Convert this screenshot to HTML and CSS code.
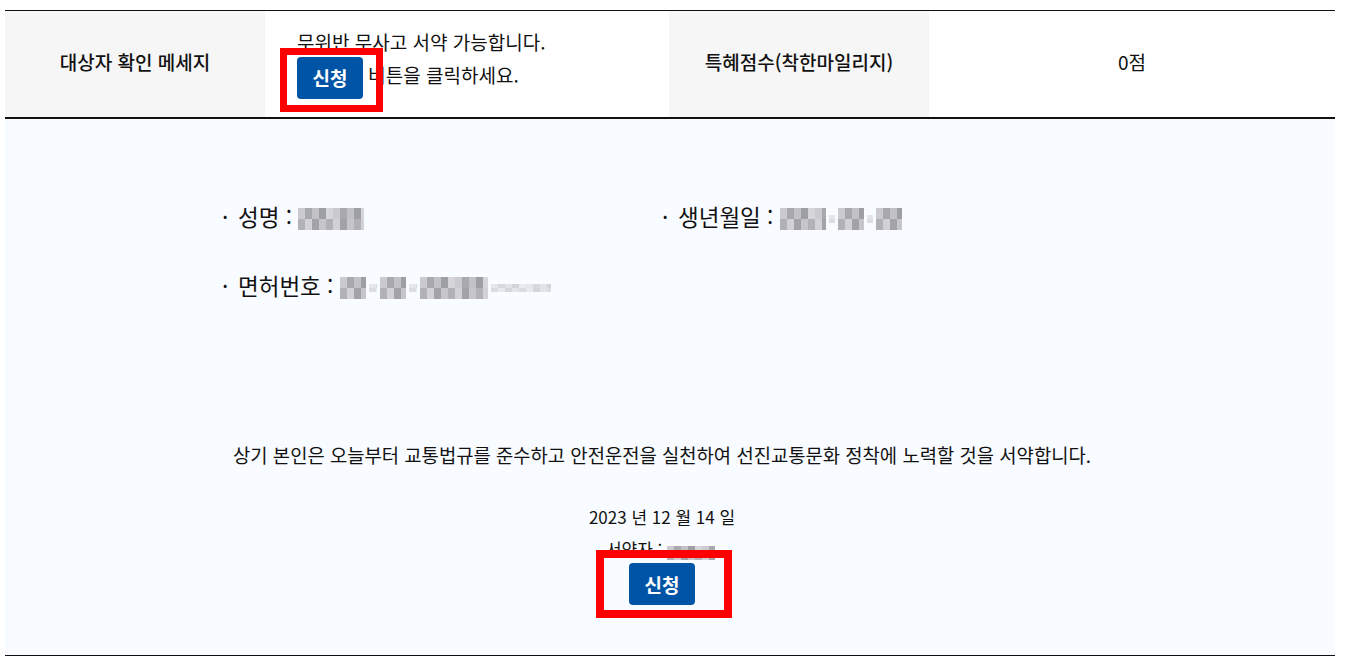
FILE: index.html
```html
<!DOCTYPE html>
<html lang="ko">
<head>
    <meta charset="UTF-8">
    <meta name="viewport" content="width=device-width, initial-scale=1.0">
    <title>안전운전 서약</title>
    <link rel="stylesheet" href="styles.css">
</head>
<body>

    <div class="wrap">
        <!-- 대상자 확인 -->
        <table class="check-table">
            <tr>
                <th>대상자 확인 메세지</th>
                <td class="msg">
                    <p>무위반 무사고 서약 가능합니다.</p>
                    <p><span class="btn-box"><button type="button" class="btn">신청</button><span class="mark mark-top"></span></span> 버튼을 클릭하세요.</p>
                </td>
                <th>특혜점수(착한마일리지)</th>
                <td class="score">0점</td>
            </tr>
        </table>

        <!-- 서약서 -->
        <div class="pledge">
            <ul class="person">
                <li>성명 : <span class="mosaic w-name"></span></li>
                <li>생년월일 : <span class="mosaic w-4"></span><span class="mosaic dim w-dot"></span><span class="mosaic w-2"></span><span class="mosaic dim w-dot"></span><span class="mosaic w-2"></span></li>
                <li>면허번호 : <span class="mosaic w-2"></span><span class="mosaic dim w-dash"></span><span class="mosaic w-2"></span><span class="mosaic dim w-dash"></span><span class="mosaic w-6"></span><span class="mosaic dim w-tail"></span></li>
            </ul>

            <p class="oath">상기 본인은 오늘부터 교통법규를 준수하고 안전운전을 실천하여 선진교통문화 정착에 노력할 것을 서약합니다.</p>

            <p class="date">2023 년 12 월 14 일</p>
            <p class="signer">서약자 : <span class="mosaic w-signer"></span></p>

            <div class="submit">
                <span class="btn-box"><button type="button" class="btn">신청</button><span class="mark mark-bottom"></span></span>
            </div>
        </div>
    </div>

</body>
</html>
```

FILE: styles.css
```css
body {
    margin: 0;
    background: #fff;
    color: #111;
    font-family: "Noto Sans CJK KR", "Noto Sans", sans-serif;
}

.wrap {
    width: 1330px;
    margin: 10px 0 0 5px;
}

p {
    margin: 0;
}

/* top table */
.check-table {
    width: 100%;
    border-collapse: collapse;
    border-top: 1px solid #111;
    border-bottom: 2px solid #111;
    font-size: 19px;
}

.check-table th,
.check-table td {
    height: 106px;
    padding: 0;
    vertical-align: middle;
}

.check-table th,
.check-table .score {
    height: 101px;
    padding-bottom: 5px;
}

.check-table th {
    width: 260px;
    background: #f6f6f6;
    font-weight: 500;
    text-align: center;
}

.check-table .msg {
    width: 372px;
    padding-left: 32px;
    text-align: left;
}

.check-table .msg p {
    line-height: 24px;
}

.check-table .msg p + p {
    margin-top: 3px;
}

.check-table .score {
    text-align: center;
}

/* button + annotation box */
.btn-box {
    position: relative;
    display: inline-block;
    vertical-align: middle;
}

.btn {
    display: block;
    width: 66px;
    height: 42px;
    padding: 0;
    border: none;
    border-radius: 4px;
    background: #0054a6;
    color: #fff;
    font-family: inherit;
    font-size: 19px;
    font-weight: 700;
    cursor: pointer;
}

.mark {
    position: absolute;
    border: 7px solid #f00;
    pointer-events: none;
}

.mark-top {
    top: -9px;
    bottom: -13px;
    left: -17px;
    right: -20px;
}

.mark-bottom {
    top: -13px;
    bottom: -13px;
    left: -33px;
    right: -37px;
    border-width: 8px;
}

/* pledge */
.pledge {
    background: #f8fbff;
    border-bottom: 1px solid #111;
    padding: 83px 16px 50px 0;
    text-align: center;
}

.person {
    list-style: none;
    width: 880px;
    margin: 0 auto;
    padding: 0;
    display: grid;
    grid-template-columns: 440px 440px;
    row-gap: 41px;
    text-align: left;
    font-size: 22.5px;
    line-height: 28px;
}

.person li::before {
    content: "·";
    display: inline-block;
    width: 16px;
}

/* blurred personal data */
.mosaic {
    display: inline-block;
    height: 22px;
    margin-right: 3px;
    vertical-align: -4px;
    background:
        repeating-linear-gradient(90deg, #c3c2c8 0 7px, #9b9aa2 7px 14px, #b8b7bd 14px 21px, #8f8e96 21px 28px, #d0cfd4 28px 35px) top / 100% 50% no-repeat,
        repeating-linear-gradient(90deg, #a6a5ab 0 7px, #cbcad0 7px 14px, #94939a 14px 21px, #bdbcc2 21px 28px) bottom / 100% 50% no-repeat;
    opacity: 0.85;
}

.mosaic.dim {
    height: 8px;
    vertical-align: 3px;
    opacity: 0.35;
}

.w-name { width: 66px; }
.w-2 { width: 26px; }
.w-4 { width: 46px; }
.w-6 { width: 68px; }
.w-dot { width: 6px; }
.w-dash { width: 8px; }
.w-tail { width: 60px; }

.w-signer {
    width: 48px;
    height: 14px;
}

.oath {
    margin-top: 143px;
    font-size: 18.8px;
    line-height: 26px;
}

.date {
    margin-top: 37px;
    font-size: 17px;
    line-height: 24px;
}

.signer {
    margin-top: 9px;
    font-size: 17px;
    line-height: 22px;
}

.submit {
    margin-top: 3px;
}
```
